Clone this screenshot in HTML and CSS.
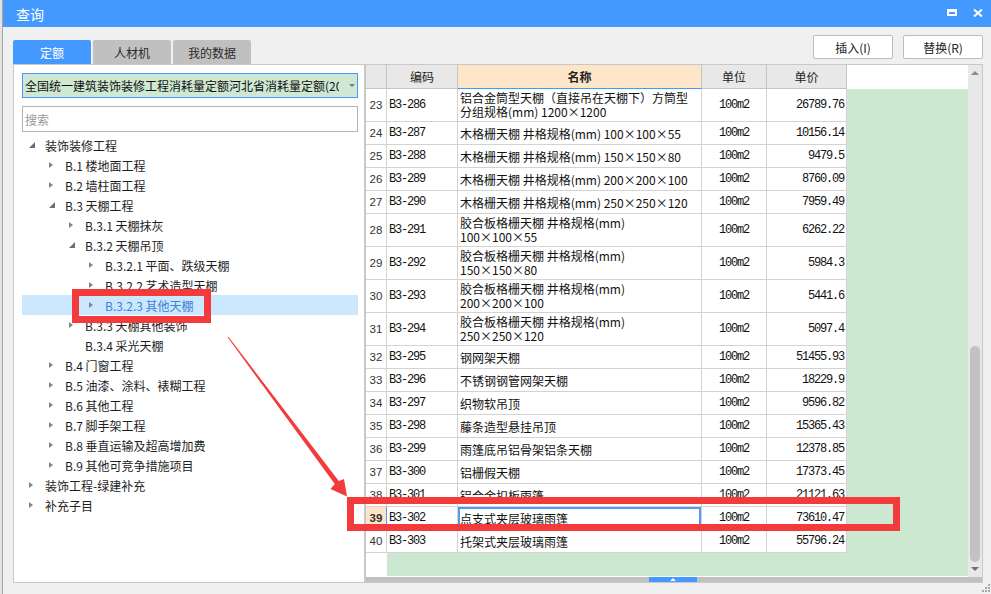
FILE: index.html
```html
<!DOCTYPE html>
<html lang="zh-CN">
<head>
<meta charset="utf-8">
<title>查询</title>
<link rel="stylesheet" href="styles.css">
</head>
<body>
<div class="page">
  <div class="backstrip"></div>
  <div class="dialog">
    <div class="titlebar">
      <span class="title">查询</span>
      <div class="win-btns">
        <span class="icon-max"></span>
        <svg class="icon-close" width="10" height="8" viewBox="0 0 10 8"><path d="M1 0.5 L9 7.5 M9 0.5 L1 7.5" stroke="#fff" stroke-width="2" fill="none"/></svg>
      </div>
    </div>
    <div class="toolbar">
      <div class="tabs">
        <div class="tab active">定额</div>
        <div class="tab">人材机</div>
        <div class="tab">我的数据</div>
      </div>
      <div class="actions">
        <button class="btn">插入(I)</button>
        <button class="btn">替换(R)</button>
      </div>
    </div>
    <div class="main">
      <div class="left-panel">
        <div class="select"><span class="select-text">全国统一建筑装饰装修工程消耗量定额河北省消耗量定额(2018)</span><span class="caret"></span></div>
        <div class="search">搜索</div>
        <ul class="tree">
          <li class="node l0"><span class="tw"><i class="tri-open"></i></span><span>装饰装修工程</span></li>
          <li class="node l1"><span class="tw"><i class="tri-closed"></i></span><span>B.1 楼地面工程</span></li>
          <li class="node l1"><span class="tw"><i class="tri-closed"></i></span><span>B.2 墙柱面工程</span></li>
          <li class="node l1"><span class="tw"><i class="tri-open"></i></span><span>B.3 天棚工程</span></li>
          <li class="node l2"><span class="tw"><i class="tri-closed"></i></span><span>B.3.1 天棚抹灰</span></li>
          <li class="node l2"><span class="tw"><i class="tri-open"></i></span><span>B.3.2 天棚吊顶</span></li>
          <li class="node l3"><span class="tw"><i class="tri-closed"></i></span><span>B.3.2.1 平面、跌级天棚</span></li>
          <li class="node l3"><span class="tw"><i class="tri-closed"></i></span><span>B.3.2.2 艺术造型天棚</span></li>
          <li class="node l3 selected"><span class="tw"><i class="tri-closed"></i></span><span>B.3.2.3 其他天棚</span></li>
          <li class="node l2"><span class="tw"><i class="tri-closed"></i></span><span>B.3.3 天棚其他装饰</span></li>
          <li class="node l2"><span class="tw"></span><span>B.3.4 采光天棚</span></li>
          <li class="node l1"><span class="tw"><i class="tri-closed"></i></span><span>B.4 门窗工程</span></li>
          <li class="node l1"><span class="tw"><i class="tri-closed"></i></span><span>B.5 油漆、涂料、裱糊工程</span></li>
          <li class="node l1"><span class="tw"><i class="tri-closed"></i></span><span>B.6 其他工程</span></li>
          <li class="node l1"><span class="tw"><i class="tri-closed"></i></span><span>B.7 脚手架工程</span></li>
          <li class="node l1"><span class="tw"><i class="tri-closed"></i></span><span>B.8 垂直运输及超高增加费</span></li>
          <li class="node l1"><span class="tw"><i class="tri-closed"></i></span><span>B.9 其他可竞争措施项目</span></li>
          <li class="node l0"><span class="tw"><i class="tri-closed"></i></span><span>装饰工程-绿建补充</span></li>
          <li class="node l0"><span class="tw"><i class="tri-closed"></i></span><span>补充子目</span></li>
        </ul>
      </div>
      <div class="grid-panel">
        <div class="grid-top">
          <div class="grid-body">
            <div class="row head">
              <div class="cell c-no"></div>
              <div class="cell c-code">编码</div>
              <div class="cell c-name sel">名称</div>
              <div class="cell c-unit">单位</div>
              <div class="cell c-price">单价</div>
              <div class="fill"></div>
            </div>
            <div class="row tall"><div class="cell c-no">23</div><div class="cell c-code">B3-286</div><div class="cell c-name"><span class="ln">铝合金筒型天棚（直接吊在天棚下）方筒型</span><span class="ln">分组规格(mm) 1200×1200</span></div><div class="cell c-unit">100m2</div><div class="cell c-price">26789.76</div><div class="fill"></div></div>
            <div class="row"><div class="cell c-no">24</div><div class="cell c-code">B3-287</div><div class="cell c-name">木格栅天棚 井格规格(mm) 100×100×55</div><div class="cell c-unit">100m2</div><div class="cell c-price">10156.14</div><div class="fill"></div></div>
            <div class="row"><div class="cell c-no">25</div><div class="cell c-code">B3-288</div><div class="cell c-name">木格栅天棚 井格规格(mm) 150×150×80</div><div class="cell c-unit">100m2</div><div class="cell c-price">9479.5</div><div class="fill"></div></div>
            <div class="row"><div class="cell c-no">26</div><div class="cell c-code">B3-289</div><div class="cell c-name">木格栅天棚 井格规格(mm) 200×200×100</div><div class="cell c-unit">100m2</div><div class="cell c-price">8760.09</div><div class="fill"></div></div>
            <div class="row"><div class="cell c-no">27</div><div class="cell c-code">B3-290</div><div class="cell c-name">木格栅天棚 井格规格(mm) 250×250×120</div><div class="cell c-unit">100m2</div><div class="cell c-price">7959.49</div><div class="fill"></div></div>
            <div class="row tall"><div class="cell c-no">28</div><div class="cell c-code">B3-291</div><div class="cell c-name"><span class="ln">胶合板格栅天棚 井格规格(mm)</span><span class="ln">100×100×55</span></div><div class="cell c-unit">100m2</div><div class="cell c-price">6262.22</div><div class="fill"></div></div>
            <div class="row tall"><div class="cell c-no">29</div><div class="cell c-code">B3-292</div><div class="cell c-name"><span class="ln">胶合板格栅天棚 井格规格(mm)</span><span class="ln">150×150×80</span></div><div class="cell c-unit">100m2</div><div class="cell c-price">5984.3</div><div class="fill"></div></div>
            <div class="row tall"><div class="cell c-no">30</div><div class="cell c-code">B3-293</div><div class="cell c-name"><span class="ln">胶合板格栅天棚 井格规格(mm)</span><span class="ln">200×200×100</span></div><div class="cell c-unit">100m2</div><div class="cell c-price">5441.6</div><div class="fill"></div></div>
            <div class="row tall"><div class="cell c-no">31</div><div class="cell c-code">B3-294</div><div class="cell c-name"><span class="ln">胶合板格栅天棚 井格规格(mm)</span><span class="ln">250×250×120</span></div><div class="cell c-unit">100m2</div><div class="cell c-price">5097.4</div><div class="fill"></div></div>
            <div class="row"><div class="cell c-no">32</div><div class="cell c-code">B3-295</div><div class="cell c-name">钢网架天棚</div><div class="cell c-unit">100m2</div><div class="cell c-price">51455.93</div><div class="fill"></div></div>
            <div class="row"><div class="cell c-no">33</div><div class="cell c-code">B3-296</div><div class="cell c-name">不锈钢钢管网架天棚</div><div class="cell c-unit">100m2</div><div class="cell c-price">18229.9</div><div class="fill"></div></div>
            <div class="row"><div class="cell c-no">34</div><div class="cell c-code">B3-297</div><div class="cell c-name">织物软吊顶</div><div class="cell c-unit">100m2</div><div class="cell c-price">9596.82</div><div class="fill"></div></div>
            <div class="row"><div class="cell c-no">35</div><div class="cell c-code">B3-298</div><div class="cell c-name">藤条造型悬挂吊顶</div><div class="cell c-unit">100m2</div><div class="cell c-price">15365.43</div><div class="fill"></div></div>
            <div class="row"><div class="cell c-no">36</div><div class="cell c-code">B3-299</div><div class="cell c-name">雨篷底吊铝骨架铝条天棚</div><div class="cell c-unit">100m2</div><div class="cell c-price">12378.85</div><div class="fill"></div></div>
            <div class="row"><div class="cell c-no">37</div><div class="cell c-code">B3-300</div><div class="cell c-name">铝栅假天棚</div><div class="cell c-unit">100m2</div><div class="cell c-price">17373.45</div><div class="fill"></div></div>
            <div class="row"><div class="cell c-no">38</div><div class="cell c-code">B3-301</div><div class="cell c-name">铝合金扣板雨篷</div><div class="cell c-unit">100m2</div><div class="cell c-price">21121.63</div><div class="fill"></div></div>
            <div class="row"><div class="cell c-no current">39</div><div class="cell c-code">B3-302</div><div class="cell c-name focus">点支式夹层玻璃雨篷</div><div class="cell c-unit">100m2</div><div class="cell c-price">73610.47</div><div class="fill"></div></div>
            <div class="row"><div class="cell c-no">40</div><div class="cell c-code">B3-303</div><div class="cell c-name">托架式夹层玻璃雨篷</div><div class="cell c-unit">100m2</div><div class="cell c-price">55796.24</div><div class="fill"></div></div>
            <div class="grid-empty"></div>
          </div>
          <div class="vscroll">
            <span class="arr-up"></span>
            <span class="vspace"></span>
            <span class="thumb"></span>
            <span class="arr-down"></span>
          </div>
        </div>
        <div class="hscroll"><span class="hthumb"><i class="harr"></i></span></div>
      </div>
    </div>
    <div class="statusbar">
      <svg class="grip" width="10" height="9" viewBox="0 0 10 9"><g fill="#a8a8a8"><rect x="7" y="1" width="2" height="2"/><rect x="4" y="4" width="2" height="2"/><rect x="7" y="4" width="2" height="2"/><rect x="1" y="7" width="2" height="2"/><rect x="4" y="7" width="2" height="2"/><rect x="7" y="7" width="2" height="2"/></g></svg>
    </div>
  </div>
</div>
<svg class="annot" width="991" height="594" viewBox="0 0 991 594"><polygon fill="#f33b3b" points="228.4,336.7 338.8,480.9 344,479 347,496.5 330.5,489 334.8,483.9 227.6,337.3"/></svg>
<div class="mark mark-tree"></div>
<div class="mark mark-row"></div>
</body>
</html>
```
FILE: styles.css
```css
* { box-sizing: border-box; margin: 0; padding: 0; }
html, body { width: 991px; height: 594px; overflow: hidden; }
body {
  position: relative;
  font-family: "Noto Sans CJK SC", "Noto Sans", sans-serif;
  font-size: 12px;
  color: #1e1e1e;
  background: #f0f0f0;
}
.page { display: flex; height: 594px; }
.backstrip { width: 3px; background: #e2e2e2; border-right: 1px solid #a6a6a6; }
.dialog { flex: 1; display: flex; flex-direction: column; background: #f0f0f0; }

.titlebar {
  height: 27px;
  background: #4499ff;
  color: #fff;
  display: flex;
  align-items: center;
  justify-content: space-between;
  padding: 0 8px 0 13px;
}
.title { font-size: 14px; }
.win-btns { display: flex; align-items: center; gap: 16px; margin-top: -2px; }
.icon-max { width: 10px; height: 7px; border: 2px solid #fff; border-top-width: 3px; }
.icon-close { display: block; }

.toolbar {
  height: 37px;
  display: flex;
  justify-content: space-between;
  padding: 0 8px 0 10px;
}
.tabs { display: flex; gap: 2px; align-self: flex-end; }
.tab {
  width: 78px;
  height: 24px;
  display: flex;
  align-items: center;
  justify-content: center;
  background: #c0c0c0;
  color: #2a2a2a;
  border-radius: 2px 2px 0 0;
}
.tab.active { background: #4499ff; color: #fff; }
.actions { display: flex; gap: 10px; margin-top: 8px; align-self: flex-start; }
.btn {
  width: 80px;
  height: 24px;
  background: #fff;
  border: 1px solid #bdbdbd;
  border-radius: 2px;
  font: inherit;
  font-size: 12px;
  color: #222;
}

.main { height: 519px; margin: 0 8px 0 10px; display: flex; }

.left-panel {
  width: 352px;
  background: #fff;
  border: 1px solid #c8c8c8;
  padding: 8px 6px 0 8px;
  display: flex;
  flex-direction: column;
}
.select {
  height: 25px;
  border: 1px solid #4499ff;
  background: #cfe8d3;
  display: flex;
  align-items: center;
  padding-left: 2px;
}
.select-text { width: 314px; overflow: hidden; white-space: nowrap; color: #111; }
.caret {
  margin-left: 10px;
  width: 0; height: 0;
  border-top: 3px solid #7a7a7a;
  border-left: 3px solid transparent;
  border-right: 3px solid transparent;
}
.search {
  margin-top: 8px;
  height: 26px;
  border: 1px solid #b4b4b4;
  color: #9a9a9a;
  padding-left: 2px;
  display: flex;
  align-items: center;
}
.tree { list-style: none; margin-top: 3px; }
.node { height: 20px; display: flex; align-items: center; white-space: nowrap; color: #1e1e1e; }
.l0 { padding-left: 7px; }
.l1 { padding-left: 27px; }
.l2 { padding-left: 47px; }
.l3 { padding-left: 67px; }
.node.selected { background: #cce8ff; color: #3d7fd9; }
.tw { width: 16px; flex-shrink: 0; display: flex; align-items: center; }
.tri-closed {
  width: 0; height: 0;
  border-left: 4px solid #858585;
  border-top: 3.5px solid transparent;
  border-bottom: 3.5px solid transparent;
}
.tri-open {
  width: 0; height: 0;
  border-bottom: 6px solid #6e6e6e;
  border-left: 6px solid transparent;
}

.grid-panel {
  flex: 1;
  border: 1px solid #c8c8c8;
  background: #fff;
  display: flex;
  flex-direction: column;
}
.grid-top { flex: 1; display: flex; min-height: 0; }
.grid-body {
  flex: 1;
  display: flex;
  flex-direction: column;
  background: #cde8d0;
  border-bottom: 1px solid #fff;
}
.row { display: flex; height: 23px; flex-shrink: 0; }
.row.tall { height: 33px; }
.row.head { height: 24px; }
.cell {
  display: flex;
  align-items: center;
  flex-shrink: 0;
  background: #fff;
  border-right: 1px solid #d3d3d3;
  border-bottom: 1px solid #d3d3d3;
  overflow: hidden;
  white-space: nowrap;
}
.fill { flex: 1; }
.c-no {
  width: 21px;
  justify-content: center;
  font-family: "Liberation Sans", Arial, sans-serif;
  font-size: 11.5px;
  color: #333;
}
.c-code, .c-unit, .c-price {
  font-family: "Liberation Mono", monospace;
  font-size: 12px;
  letter-spacing: -1.2px;
  color: #111;
}
.c-code { width: 71px; padding-left: 2px; }
.c-name { width: 244px; padding-left: 2px; color: #111; }
.c-unit { width: 65px; justify-content: center; }
.c-price { width: 80px; justify-content: flex-end; padding-right: 2px; }
.tall .c-name {
  flex-direction: column;
  align-items: flex-start;
  justify-content: flex-start;
  padding-top: 2px;
}
.ln { display: block; height: 14px; line-height: 14px; overflow: visible; }
.head .cell {
  background: #e8e8e8;
  border-color: #c4c4c4;
  justify-content: center;
  font-family: "Noto Sans CJK SC", sans-serif;
  letter-spacing: 0;
  padding: 0;
  color: #222;
}
.head .c-name.sel { background: #fde5c8; font-weight: bold; border-bottom-color: #4499ff; }
.head .fill { background: #fff; }
.c-no.current { background: #fde4c6; font-weight: bold; border-right-color: #4499ff; }
.c-name.focus { box-shadow: inset 0 0 0 2px #4d9cf6; }
.grid-empty { flex: 1; background: linear-gradient(to right, #fff 21px, transparent 21px); }

.vscroll {
  width: 14px;
  background: #e8e8e8;
  display: flex;
  flex-direction: column;
  align-items: center;
}
.arr-up {
  margin-top: 6px;
  width: 0; height: 0;
  border-bottom: 4px solid #8a8a8a;
  border-left: 4px solid transparent;
  border-right: 4px solid transparent;
}
.vspace { flex: 1; }
.thumb { width: 10px; height: 216px; border-radius: 5px; background: #c2c2c2; }
.arr-down {
  margin: 5px 0 6px;
  width: 0; height: 0;
  border-top: 4px solid #6f6f6f;
  border-left: 4px solid transparent;
  border-right: 4px solid transparent;
}
.hscroll { height: 5px; background: #c0c0c0; display: flex; }
.hthumb {
  margin-left: 283px;
  width: 48px;
  height: 5px;
  background: #4499ff;
  display: flex;
  justify-content: center;
  align-items: center;
}
.harr {
  width: 0; height: 0;
  border-bottom: 3px solid #fff;
  border-left: 3px solid transparent;
  border-right: 3px solid transparent;
}
.statusbar { height: 11px; display: flex; justify-content: flex-end; }
.grip { display: block; }

.annot { position: absolute; left: 0; top: 0; pointer-events: none; }
.mark { position: absolute; border: 7px solid #f33b3b; pointer-events: none; }
.mark-tree { left: 72px; top: 289px; width: 139px; height: 34px; }
.mark-row { left: 347px; top: 497px; width: 553px; height: 34px; }
```
